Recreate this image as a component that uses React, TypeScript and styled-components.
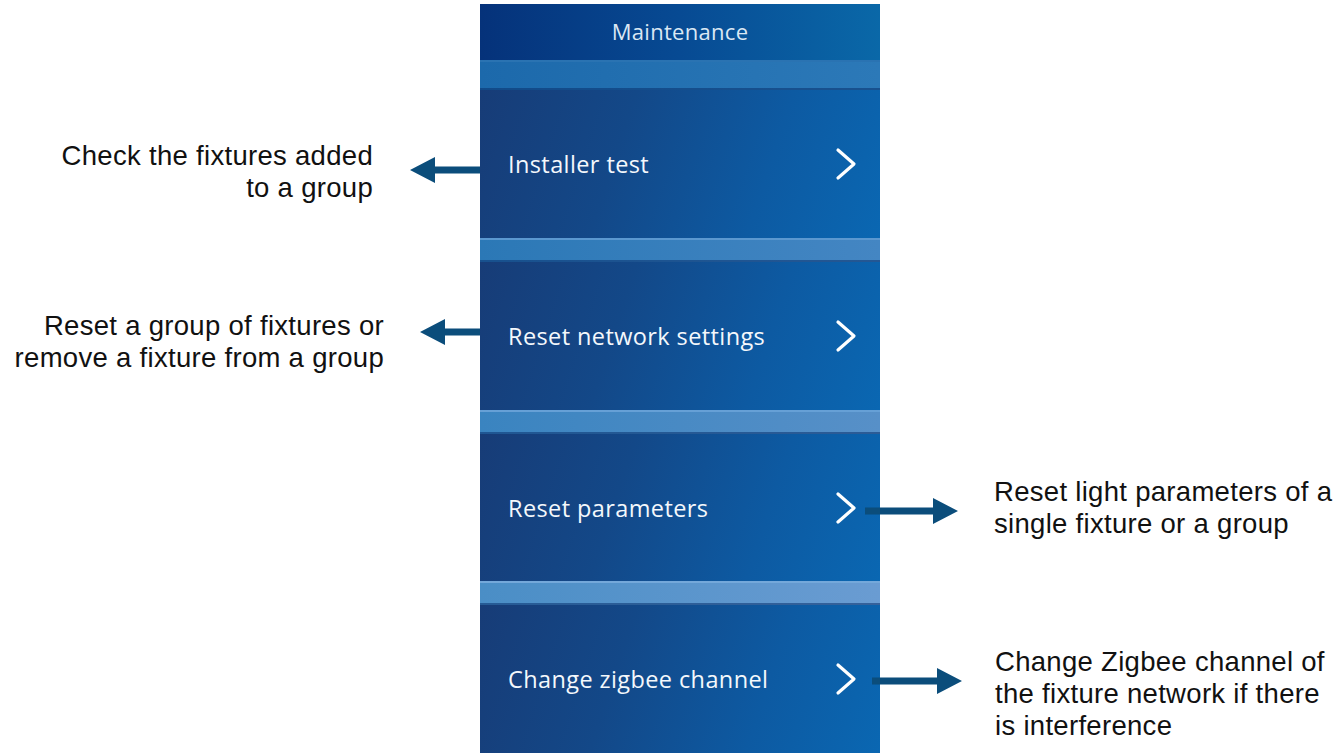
import React from "react";
import styled, { createGlobalStyle } from "styled-components";

const Global = createGlobalStyle`
  html, body { margin: 0; padding: 0; background: #ffffff; }
  body { font-family: "Open Sans", "Liberation Sans", sans-serif; }
`;

const Page = styled.div`
  width: 1334px;
  height: 753px;
  overflow: hidden;
  padding-top: 4px;
  box-sizing: border-box;
  display: grid;
  grid-template-columns: 480px 400px 1fr;
  grid-template-rows: 56px 30px 148px 24px 148px 24px 147px 24px 148px;
`;

const Header = styled.div`
  grid-column: 2;
  display: flex;
  align-items: center;
  justify-content: center;
  background: linear-gradient(90deg, #05327a 0%, #074a93 50%, #0a68a8 100%);
  color: #dbe8f4;
  font-family: "Open Sans", sans-serif;
  font-weight: 400;
  font-size: 22px;
  letter-spacing: 0.3px;
  padding-bottom: 3px;
  box-sizing: border-box;
`;

const Separator = styled.div<{ $from: string; $to: string; $edge: string }>`
  grid-column: 2;
  background: linear-gradient(90deg, ${(p) => p.$from}, ${(p) => p.$to});
  border-top: 2px solid ${(p) => p.$edge};
  border-bottom: 2px solid rgba(10, 50, 110, 0.55);
  box-sizing: border-box;
`;

const Item = styled.div`
  grid-column: 2;
  display: flex;
  align-items: center;
  justify-content: space-between;
  padding: 0 23px 0 28px;
  background: linear-gradient(108deg, #173c77 0%, #134888 35%, #0d5aa2 70%, #0a67b2 100%);
  color: #f4f8fc;
  font-family: "Open Sans", sans-serif;
  font-weight: 500;
  font-size: 23.5px;
  letter-spacing: 0.4px;
`;

const LeftNote = styled.div<{ $row: number }>`
  grid-column: 1;
  grid-row: ${(p) => p.$row};
  display: flex;
  align-items: center;
  justify-content: flex-end;
`;

const RightNote = styled.div<{ $row: number }>`
  grid-column: 3;
  grid-row: ${(p) => p.$row};
  display: flex;
  align-items: center;
`;

const NoteText = styled.div<{ $align: "left" | "right"; $shift: number }>`
  font-family: "Liberation Sans", Arial, sans-serif;
  font-size: 27.5px;
  letter-spacing: 0.3px;
  line-height: 32px;
  color: #111111;
  text-align: ${(p) => p.$align};
  margin-top: ${(p) => p.$shift * 2}px;
  white-space: nowrap;
  font-variant-ligatures: none;
`;

const ArrowBox = styled.svg<{ $shift: number; $gapLeft: number; $gapRight: number }>`
  display: block;
  flex: none;
  margin-top: ${(p) => p.$shift * 2}px;
  margin-left: ${(p) => p.$gapLeft}px;
  margin-right: ${(p) => p.$gapRight}px;
`;

const Chevron = () => (
  <svg width="22" height="34" viewBox="0 0 22 34">
    <polyline
      points="3,3 19,17 3,31"
      fill="none"
      stroke="#ffffff"
      strokeWidth="3.2"
      strokeLinecap="round"
      strokeLinejoin="round"
    />
  </svg>
);

const ARROW = "#0b4d7b";

function Arrow({
  length,
  dir,
  shift,
  gapLeft,
  gapRight,
}: {
  length: number;
  dir: "left" | "right";
  shift: number;
  gapLeft: number;
  gapRight: number;
}) {
  const h = 26;
  const head = 25;
  const mid = h / 2;
  const path =
    dir === "left"
      ? `M0 ${mid} L${head} 0 L${head} ${mid - 3.5} L${length} ${mid - 3.5} L${length} ${mid + 3.5} L${head} ${mid + 3.5} L${head} ${h} Z`
      : `M${length} ${mid} L${length - head} 0 L${length - head} ${mid - 3.5} L0 ${mid - 3.5} L0 ${mid + 3.5} L${length - head} ${mid + 3.5} L${length - head} ${h} Z`;
  return (
    <ArrowBox
      width={length}
      height={h}
      viewBox={`0 0 ${length} ${h}`}
      $shift={shift}
      $gapLeft={gapLeft}
      $gapRight={gapRight}
    >
      <path d={path} fill={ARROW} />
    </ArrowBox>
  );
}

export default function App() {
  return (
    <>
      <Global />
      <Page>
        <Header style={{ gridRow: 1 }}>Maintenance</Header>
        <Separator style={{ gridRow: 2 }} $from="#1c69ab" $to="#2c79b8" $edge="#2a73b2" />
        <Item style={{ gridRow: 3 }}>
          <span>Installer test</span>
          <Chevron />
        </Item>
        <Separator style={{ gridRow: 4 }} $from="#2b78b6" $to="#4486c3" $edge="#5b98d0" />
        <Item style={{ gridRow: 5 }}>
          <span>Reset network settings</span>
          <Chevron />
        </Item>
        <Separator style={{ gridRow: 6 }} $from="#3a84c0" $to="#5790c8" $edge="#66a0d6" />
        <Item style={{ gridRow: 7 }}>
          <span>Reset parameters</span>
          <Chevron />
        </Item>
        <Separator style={{ gridRow: 8 }} $from="#4a8ec6" $to="#6a9cd2" $edge="#74a8da" />
        <Item style={{ gridRow: 9 }}>
          <span>Change zigbee channel</span>
          <Chevron />
        </Item>

        <LeftNote $row={3}>
          <NoteText $align="right" $shift={8}>
            Check the fixtures added
            <br />
            to a group
          </NoteText>
          <Arrow length={70} dir="left" shift={6} gapLeft={37} gapRight={0} />
        </LeftNote>

        <LeftNote $row={5}>
          <NoteText $align="right" $shift={6}>
            Reset a group of fixtures or
            <br />
            remove a fixture from a group
          </NoteText>
          <Arrow length={60} dir="left" shift={-4} gapLeft={36} gapRight={0} />
        </LeftNote>

        <RightNote $row={7}>
          <Arrow length={93} dir="right" shift={3} gapLeft={-15} gapRight={36} />
          <NoteText $align="left" $shift={0}>
            Reset light parameters of a
            <br />
            single fixture or a group
          </NoteText>
        </RightNote>

        <RightNote $row={9}>
          <Arrow length={90} dir="right" shift={2} gapLeft={-8} gapRight={33} />
          <NoteText $align="left" $shift={15}>
            Change Zigbee channel of
            <br />
            the fixture network if there
            <br />
            is interference
          </NoteText>
        </RightNote>
      </Page>
    </>
  );
}
